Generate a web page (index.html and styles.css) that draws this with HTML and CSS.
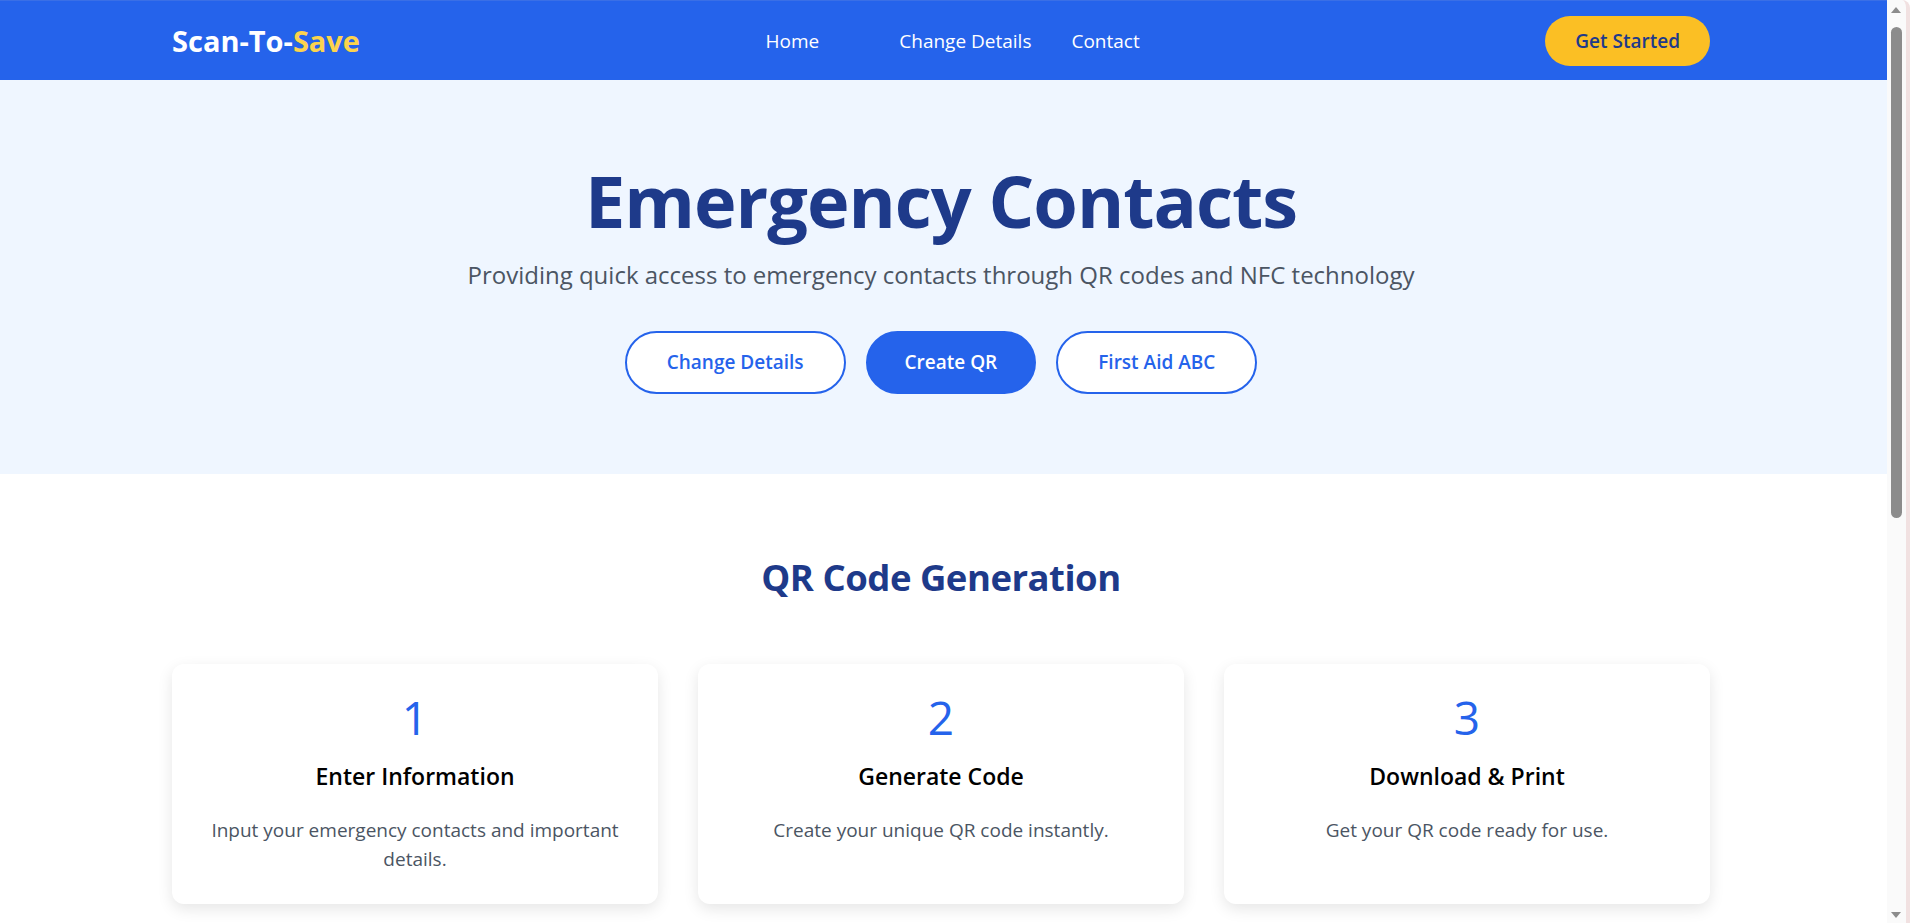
FILE: index.html
```html
<!DOCTYPE html>
<html lang="en">
<head>
<meta charset="utf-8">
<title>Scan-To-Save</title>
<link rel="stylesheet" href="styles.css">
</head>
<body>
<header class="navbar">
  <div class="nav-inner">
    <div class="logo">Scan-To-<span class="logo-accent">Save</span></div>
    <nav class="nav-links">
      <a class="nav-link nav-home" href="#">Home</a>
      <a class="nav-link" href="#">Change Details</a>
      <a class="nav-link" href="#">Contact</a>
    </nav>
    <a class="btn-start" href="#">Get Started</a>
  </div>
</header>

<section class="hero">
  <h1 class="hero-title">Emergency Contacts</h1>
  <p class="hero-sub">Providing quick access to emergency contacts through QR codes and NFC technology</p>
  <div class="hero-actions">
    <a class="btn-outline" href="#">Change Details</a>
    <a class="btn-solid" href="#">Create QR</a>
    <a class="btn-outline" href="#">First Aid ABC</a>
  </div>
</section>

<section class="steps">
  <h2 class="steps-title">QR Code Generation</h2>
  <div class="steps-grid">
    <div class="card">
      <div class="card-num">1</div>
      <h3 class="card-title">Enter Information</h3>
      <p class="card-text">Input your emergency contacts and important details.</p>
    </div>
    <div class="card">
      <div class="card-num">2</div>
      <h3 class="card-title">Generate Code</h3>
      <p class="card-text">Create your unique QR code instantly.</p>
    </div>
    <div class="card">
      <div class="card-num">3</div>
      <h3 class="card-title">Download &amp; Print</h3>
      <p class="card-text">Get your QR code ready for use.</p>
    </div>
  </div>
</section>
<div class="page-rest"></div>

<div class="scrollbar" aria-hidden="true">
  <div class="sb-arrow sb-up"></div>
  <div class="sb-thumb"></div>
  <div class="sb-arrow sb-down"></div>
</div>
</body>
</html>
```

FILE: styles.css
```css
* { box-sizing: border-box; }
html, body { margin: 0; padding: 0; }
body {
  font-family: "Open Sans", "Noto Sans", sans-serif;
  color: #111827;
  background: #ffffff;
  margin-right: 23px;
}
a { text-decoration: none; }

.navbar {
  background: #2563eb;
  height: 80px;
  border-top: 1px solid #3a6fe6;
}
.nav-inner {
  max-width: 1543px;
  margin: 0 auto;
  height: 100%;
  display: flex;
  align-items: center;
  justify-content: space-between;
  padding-right: 5px;
}
.logo {
  font-size: 29px;
  font-weight: 700;
  color: #ffffff;
}
.logo-accent { color: #fcd34d; }
.nav-links {
  display: flex;
  gap: 40px;
}
.nav-link {
  color: #ffffff;
  font-size: 19px;
}
.nav-home { margin-right: 40px; }
.btn-start {
  background: #fbbf24;
  color: #1e3a8a;
  font-size: 19px;
  font-weight: 600;
  padding: 12px 30px;
  border-radius: 999px;
  line-height: 26px;
}

.hero {
  background: #eff6ff;
  height: 394px;
  padding: 77px 5px 0 0;
  text-align: center;
}
.hero-title {
  margin: 0;
  font-size: 72px;
  font-weight: 700;
  line-height: 1.2;
  color: #1e3a8a;
  letter-spacing: -1px;
}
.hero-sub {
  margin: 15px 0 0;
  font-size: 24px;
  color: #4b5563;
}
.hero-actions {
  margin-top: 40px;
  display: flex;
  justify-content: center;
  gap: 20px;
}
.btn-outline, .btn-solid {
  border: 2px solid #2563eb;
  border-radius: 999px;
  padding: 16px 40px;
  font-size: 19px;
  font-weight: 600;
  line-height: 27px;
}
.btn-outline { background: #ffffff; color: #2563eb; }
.btn-solid { background: #2563eb; color: #ffffff; padding: 16px 37px; }

.steps {
  padding: 78px 5px 80px 0;
}
.steps-title {
  margin: 0;
  text-align: center;
  font-size: 36.5px;
  font-weight: 700;
  color: #1e3a8a;
  letter-spacing: -0.5px;
}
.steps-grid {
  max-width: 1538px;
  margin: 62px auto 0;
  display: grid;
  grid-template-columns: repeat(3, 1fr);
  gap: 40px;
}
.card {
  background: #ffffff;
  border-radius: 12px;
  box-shadow: 0 5px 15px rgba(0, 0, 0, 0.1);
  height: 240px;
  padding: 26px 30px;
  text-align: center;
}
.card-num {
  font-size: 46px;
  color: #2563eb;
  line-height: 1.2;
}
.card-title {
  margin: 17px 0 0;
  font-size: 23px;
  line-height: 1.3;
  font-weight: 600;
  color: #000000;
}
.card-text {
  margin: 24px 0 0;
  font-size: 19px;
  line-height: 29px;
  color: #4b5563;
}
.page-rest { height: 760px; }

.scrollbar {
  position: fixed;
  top: 0;
  right: 0;
  width: 23px;
  height: 100vh;
  background: #fafafa;
  border-right: 4px solid #f1e1e1;
  border-top-right-radius: 8px;
}
.sb-thumb {
  position: absolute;
  left: 4px;
  top: 27px;
  width: 11px;
  height: 491px;
  border-radius: 6px;
  background: #8c8c8c;
}
.sb-arrow {
  position: absolute;
  left: 4px;
  width: 0;
  height: 0;
  border-left: 5.5px solid transparent;
  border-right: 5.5px solid transparent;
}
.sb-up { top: 7px; border-bottom: 6px solid #8c8c8c; }
.sb-down { bottom: 5px; border-top: 6px solid #8c8c8c; }
```
